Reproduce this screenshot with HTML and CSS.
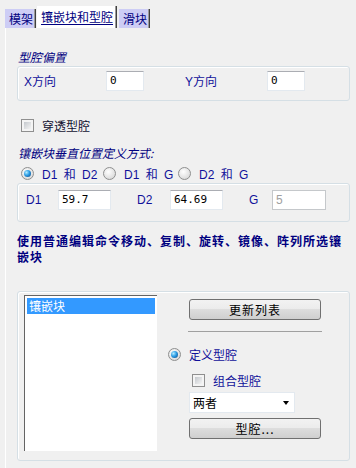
FILE: index.html
```html
<!DOCTYPE html>
<html lang="zh-CN">
<head>
  <meta charset="UTF-8">
  <title>镶嵌块和型腔</title>
  <link rel="stylesheet" href="styles.css">
</head>
<body>
  <!-- Tab strip -->
  <div class="tabs">
    <div class="tab">模架</div>
    <div class="tab active"><u>镶嵌块和型腔</u></div>
    <div class="tab">滑块</div>
  </div>

  <div class="panel">
    <div class="caption">型腔偏置</div>
    <div class="group offset">
      <span class="lbl w82"><span class="ax">X</span>方向</span>
      <div class="edit w38">0</div>
      <span class="spacer"></span>
      <span class="lbl w82"><span class="ax">Y</span>方向</span>
      <div class="edit w38">0</div>
    </div>

    <div class="check-row">
      <span class="box"></span>
      <span class="plain">穿透型腔</span>
    </div>

    <div class="caption second">镶嵌块垂直位置定义方式:</div>
    <div class="radios">
      <div class="opt o1"><span class="radio on"></span><span class="latin">D1 和 D2</span></div>
      <div class="opt o2"><span class="radio"></span><span class="latin">D1 和 G</span></div>
      <div class="opt"><span class="radio"></span><span class="latin">D2 和 G</span></div>
    </div>
    <div class="group dims">
      <span class="lbl latin d1">D1</span>
      <div class="edit w53">59.7</div>
      <span class="lbl latin d2">D2</span>
      <div class="edit w53">64.69</div>
      <span class="lbl latin g">G</span>
      <div class="edit w54 off">5</div>
    </div>

    <div class="note">使用普通编辑命令移动、复制、旋转、镜像、阵列所选镶<br>嵌块</div>

    <div class="group lists">
      <div class="listbox">
        <div class="item">镶嵌块</div>
      </div>
      <div class="side">
        <div class="btn">更新列表</div>
        <div class="sep"></div>
        <div class="def">
          <span class="radio on"></span>
          <span class="blue">定义型腔</span>
        </div>
        <div class="check-row combo">
          <span class="box"></span>
          <span class="blue">组合型腔</span>
        </div>
        <div class="select">
          <span>两者</span>
          <span class="arrow"></span>
        </div>
        <div class="btn second-btn">型腔...</div>
      </div>
    </div>
  </div>
</body>
</html>
```
FILE: styles.css
```css
body {
  margin: 0;
  width: 356px;
  height: 468px;
  overflow: hidden;
  background-color: #f0f0f0;
  font-family: "Noto Sans CJK SC", sans-serif;
  font-size: 12px;
  color: #000080;
}

/* tabs */
.tabs {
  display: flex;
  align-items: flex-end;
  height: 28px;
  padding-left: 5px;
}
.tab {
  height: 19px;
  line-height: 19px;
  padding: 0 2px 0 4px;
  background-color: #cdcdf5;
  border-right: 1px solid #404040;
  box-shadow: inset -1px 0 #9a9a9a;
  color: #000080;
}
.tab.active {
  height: 22px;
  line-height: 22px;
  margin: 0 2px 0 1px;
  padding-right: 3px;
  background-color: #ffffff;
}
.tab u {
  text-underline-offset: 2px;
}

/* panel */
.panel {
  margin-left: 5px;
  border-left: 1px solid #ffffff;
  padding: 21px 6px 0 11px;
  height: 440px;
}
.caption {
  font-style: italic;
  line-height: 16px;
  margin-left: 1px;
  color: #000080;
}
.caption.second {
  margin-top: 12px;
}
.group {
  border: 1px solid #d5dfe5;
  border-radius: 3px;
  box-shadow: inset 1px 1px #ffffff;
  box-sizing: border-box;
}
.lbl {
  line-height: 20px;
  color: #10109a;
}
.ax {
  font-family: "Liberation Sans", sans-serif;
}
.w82 { width: 82px; }
.spacer { width: 41px; }
.edit {
  height: 20px;
  box-sizing: border-box;
  border: 1px solid #e3e9ef;
  border-top-color: #abadb3;
  background-color: #ffffff;
  padding-left: 3px;
  line-height: 18px;
  font-family: "DejaVu Sans Mono", monospace;
  font-size: 11px;
  color: #000000;
}
.edit.off {
  border-color: #c5c8cb;
  color: #a0a0a0;
  font-family: "Liberation Sans", sans-serif;
  font-size: 12px;
}
.w38 { width: 38px; }
.w53 { width: 53px; }
.w54 { width: 54px; }

.offset {
  display: flex;
  margin-top: 1px;
  height: 35px;
  padding: 4px 0 0 6px;
}

/* check boxes and radios */
.check-row {
  display: flex;
  align-items: center;
  height: 16px;
  margin: 16px 0 0 4px;
}
.box {
  display: flex;
  align-items: center;
  justify-content: center;
  width: 13px;
  height: 13px;
  box-sizing: border-box;
  border: 1px solid #8f8f8f;
  background-color: #f4f4f4;
  margin-right: 8px;
}
.box::after {
  content: "";
  width: 7px;
  height: 7px;
  background: linear-gradient(135deg, #c4c8cd, #f4f4f4);
}
.plain {
  color: #101030;
}
.radio {
  display: flex;
  align-items: center;
  justify-content: center;
  width: 13px;
  height: 13px;
  box-sizing: border-box;
  border: 1px solid #8e8f8f;
  border-radius: 50%;
  background: radial-gradient(circle at 40% 35%, #ffffff, #d0d0d0);
  margin-right: 8px;
}
.radio.on::after {
  content: "";
  width: 7px;
  height: 7px;
  border-radius: 50%;
  background: radial-gradient(circle at 35% 35%, #b4ecff 0, #2b9de6 45%, #0a3f7a 100%);
}
.radios {
  display: flex;
  align-items: center;
  height: 16px;
  margin: 4px 0 0 4px;
}
.opt {
  display: flex;
  align-items: center;
}
.o1 { width: 82px; }
.o2 { width: 75px; }
.latin {
  font-family: "Liberation Sans", "Noto Sans CJK SC", sans-serif;
  word-spacing: 3px;
  color: #10109a;
}

.dims {
  display: flex;
  margin-top: 2px;
  height: 39px;
  padding: 6px 0 0 8px;
}
.d1 { width: 32px; }
.d2 { width: 33px; margin-left: 26px; }
.g { width: 23px; margin-left: 26px; }

.note {
  margin-top: 11px;
  font-weight: bold;
  font-size: 12px;
  letter-spacing: 1px;
  line-height: 16px;
  white-space: nowrap;
  color: #000080;
}

/* list group */
.lists {
  display: flex;
  margin-top: 26px;
  height: 170px;
  padding: 3px 0 0 6px;
}
.listbox {
  width: 133px;
  height: 156px;
  box-sizing: border-box;
  background-color: #ffffff;
  border-left: 1px solid #646464;
  border-top: 1px solid #646464;
  padding: 2px 2px 0 2px;
}
.item {
  height: 16px;
  line-height: 16px;
  padding-left: 2px;
  background-color: #3399ff;
  color: #ffffff;
}
.side {
  margin-left: 11px;
  width: 155px;
}
.btn {
  margin: 4px 0 0 21px;
  width: 132px;
  height: 21px;
  box-sizing: border-box;
  border: 1px solid #707070;
  border-radius: 3px;
  background: linear-gradient(#f2f2f2, #ebebeb 50%, #dddddd 50%, #cfcfcf);
  text-align: center;
  line-height: 19px;
  letter-spacing: 1px;
  color: #000000;
}
.btn.second-btn {
  margin-top: 5px;
}
.sep {
  margin: 11px 0 0 20px;
  width: 134px;
  height: 1px;
  background-color: #a0a0a0;
}
.def {
  display: flex;
  align-items: center;
  height: 13px;
  margin-top: 16px;
}
.blue {
  color: #10109a;
}
.check-row.combo {
  height: 13px;
  margin: 13px 0 0 24px;
}
.select {
  display: flex;
  justify-content: space-between;
  align-items: center;
  margin: 5px 0 0 21px;
  width: 106px;
  height: 21px;
  box-sizing: border-box;
  border: 1px solid #e3e9ef;
  background-color: #ffffff;
  padding: 0 5px 0 3px;
  color: #000000;
}
.arrow {
  width: 0;
  height: 0;
  border-left: 3px solid transparent;
  border-right: 3px solid transparent;
  border-top: 4px solid #000000;
}
```
